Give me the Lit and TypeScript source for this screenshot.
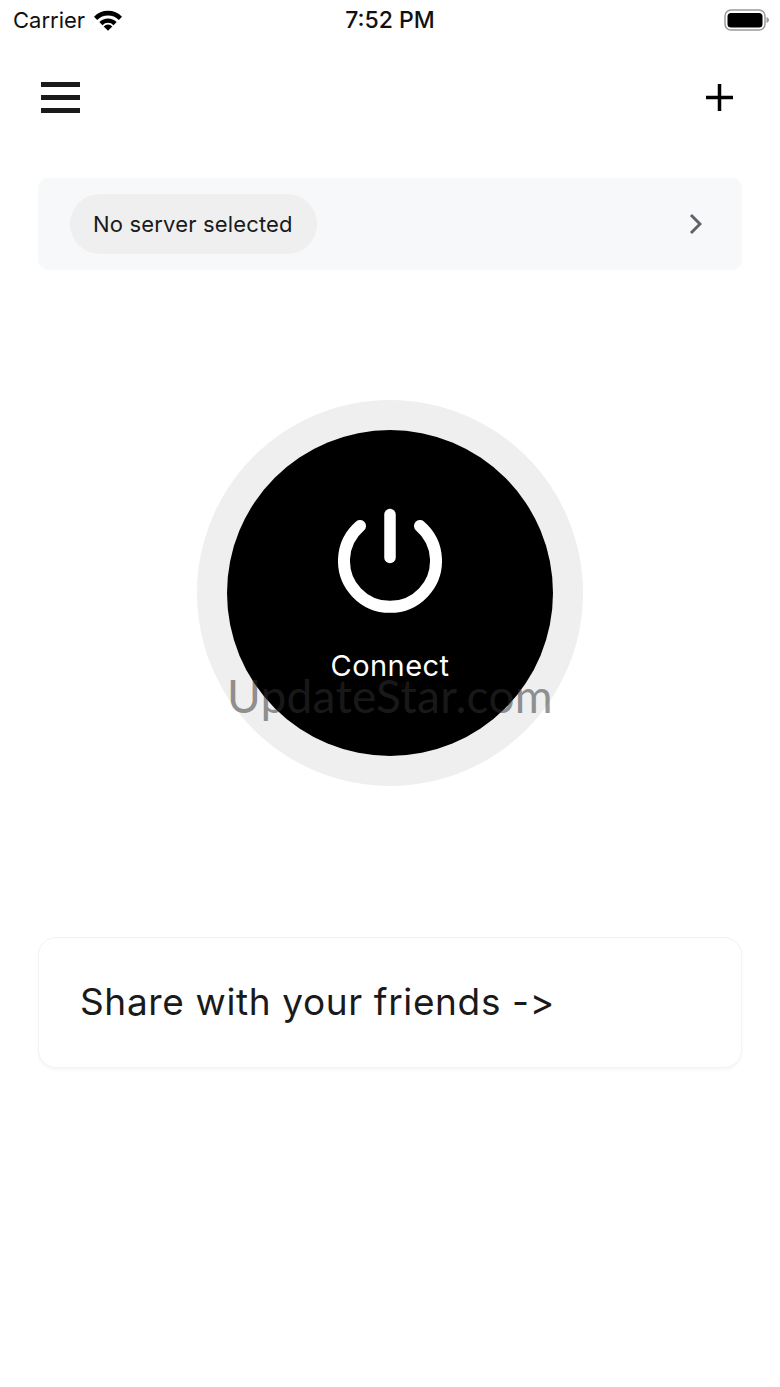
import { LitElement, html, css } from 'lit';
import { customElement } from 'lit/decorators.js';

@customElement('app-root')
export class AppRoot extends LitElement {
  static styles = css`
    :host {
      display: block;
      width: 780px;
      height: 1387px;
      background: #ffffff;
      color: #1a1a1a;
      font-family: Inter, 'Liberation Sans', sans-serif;
      overflow: hidden;
    }

    /* Status bar */
    .status {
      height: 40px;
      display: grid;
      grid-template-columns: 1fr auto 1fr;
      align-items: center;
      padding: 0 10px 0 13px;
      color: #111;
    }
    .status-left {
      display: flex;
      align-items: center;
      gap: 9px;
      font-size: 22px;
    }
    .status-time {
      font-size: 23px;
      font-weight: 500;
      margin-left: -3px;
    }
    .status-right {
      display: flex;
      justify-content: flex-end;
    }
    .status svg {
      display: block;
    }

    /* Header */
    .header {
      display: flex;
      justify-content: space-between;
      align-items: center;
      height: 58px;
      margin-top: 28px;
      margin-bottom: 52px;
      padding: 0 47px 0 41px;
    }
    .header svg {
      display: block;
    }

    /* Server selector */
    .server {
      display: flex;
      align-items: center;
      justify-content: space-between;
      height: 92px;
      margin: 0 38px;
      padding: 0 40px 0 32px;
      box-sizing: border-box;
      background: #f7f8f9;
      border-radius: 10px;
    }
    .server-pill {
      display: flex;
      align-items: center;
      height: 60px;
      padding: 0 24px 0 23px;
      border-radius: 30px;
      background: #efefef;
      font-size: 22px;
      letter-spacing: 0.17px;
    }

    /* Connect button */
    .power-wrap {
      position: relative;
      display: flex;
      justify-content: center;
      margin-top: 130px;
    }
    .power-ring {
      width: 386px;
      height: 386px;
      padding: 30px;
      box-sizing: border-box;
      border-radius: 50%;
      background: #efefef;
    }
    .power {
      width: 326px;
      height: 326px;
      border-radius: 50%;
      background: #000;
      color: #fff;
      display: flex;
      flex-direction: column;
      align-items: center;
      padding-top: 78px;
      box-sizing: border-box;
    }
    .power svg {
      display: block;
    }
    .power-label {
      margin-top: 35px;
      font-size: 29px;
      line-height: 34px;
      letter-spacing: 0.45px;
    }
    .watermark {
      position: absolute;
      left: 0;
      right: 0;
      top: 266px;
      text-align: center;
      font-family: Lato, sans-serif;
      font-weight: 400;
      font-size: 46px;
      line-height: 60px;
      letter-spacing: 0.3px;
      color: rgba(48, 48, 48, 0.52);
    }

    /* Share card */
    .share {
      display: flex;
      align-items: center;
      height: 131px;
      margin: 151px 38px 0;
      padding: 0 42px 2px 41px;
      box-sizing: border-box;
      background: #fff;
      border: 1px solid #f3f3f3;
      border-radius: 18px;
      box-shadow: 0 2px 3px rgba(0, 0, 0, 0.04);
      font-size: 37px;
      letter-spacing: 0.63px;
    }
  `;

  render() {
    return html`
      <div class="status">
        <div class="status-left">
          <span>Carrier</span>
          <svg width="28" height="21" viewBox="0 0 28 21">
            <path d="M1.600 8.300A17.500 17.500 0 0 1 26.400 8.300" stroke="#000" stroke-width="4.600" fill="none"/>
            <path d="M6.900 13.600A10 10 0 0 1 21.100 13.600" stroke="#000" stroke-width="4.400" fill="none"/>
            <path d="M14 20.700L9.700 16.400A6 6 0 0 1 18.300 16.400Z" fill="#000"/>
          </svg>
        </div>
        <div class="status-time">7:52 PM</div>
        <div class="status-right">
          <svg width="46" height="22" viewBox="0 0 46 22">
            <rect x="1" y="1" width="40" height="20" rx="6" fill="none" stroke="#9a9a9a" stroke-width="1.500"/>
            <rect x="3.500" y="4" width="35" height="14.500" rx="3.500" fill="#000"/>
            <path d="M42.500 8v6c1.500-.4 2.500-1.700 2.500-3s-1-2.600-2.500-3z" fill="#9a9a9a"/>
          </svg>
        </div>
      </div>

      <div class="header">
        <svg width="39" height="31" viewBox="0 0 39 31">
          <rect y="0" width="39" height="5" fill="#1a1a1a"/>
          <rect y="13" width="39" height="5" fill="#1a1a1a"/>
          <rect y="26" width="39" height="5" fill="#1a1a1a"/>
        </svg>
        <svg width="27" height="27" viewBox="0 0 27 27">
          <path d="M13.500 0v27M0 13.500h27" stroke="#000" stroke-width="3.500" fill="none"/>
        </svg>
      </div>

      <div class="server">
        <div class="server-pill">No server selected</div>
        <svg width="14" height="22" viewBox="0 0 14 22">
          <path d="M3 2l9 9-9 9" stroke="#5f6469" stroke-width="3" fill="none"/>
        </svg>
      </div>

      <div class="power-wrap">
        <div class="power-ring">
          <div class="power">
            <svg width="104" height="106" viewBox="0 0 104 106">
              <path d="M52 6.500v43" stroke="#fff" stroke-width="11.500" stroke-linecap="round" fill="none"/>
              <path d="M22 18a46 46 0 1 0 60 0" stroke="#fff" stroke-width="12" stroke-linecap="round" fill="none"/>
            </svg>
            <div class="power-label">Connect</div>
          </div>
        </div>
        <div class="watermark">UpdateStar.com</div>
      </div>

      <div class="share">Share with your friends -&gt;</div>
    `;
  }
}
